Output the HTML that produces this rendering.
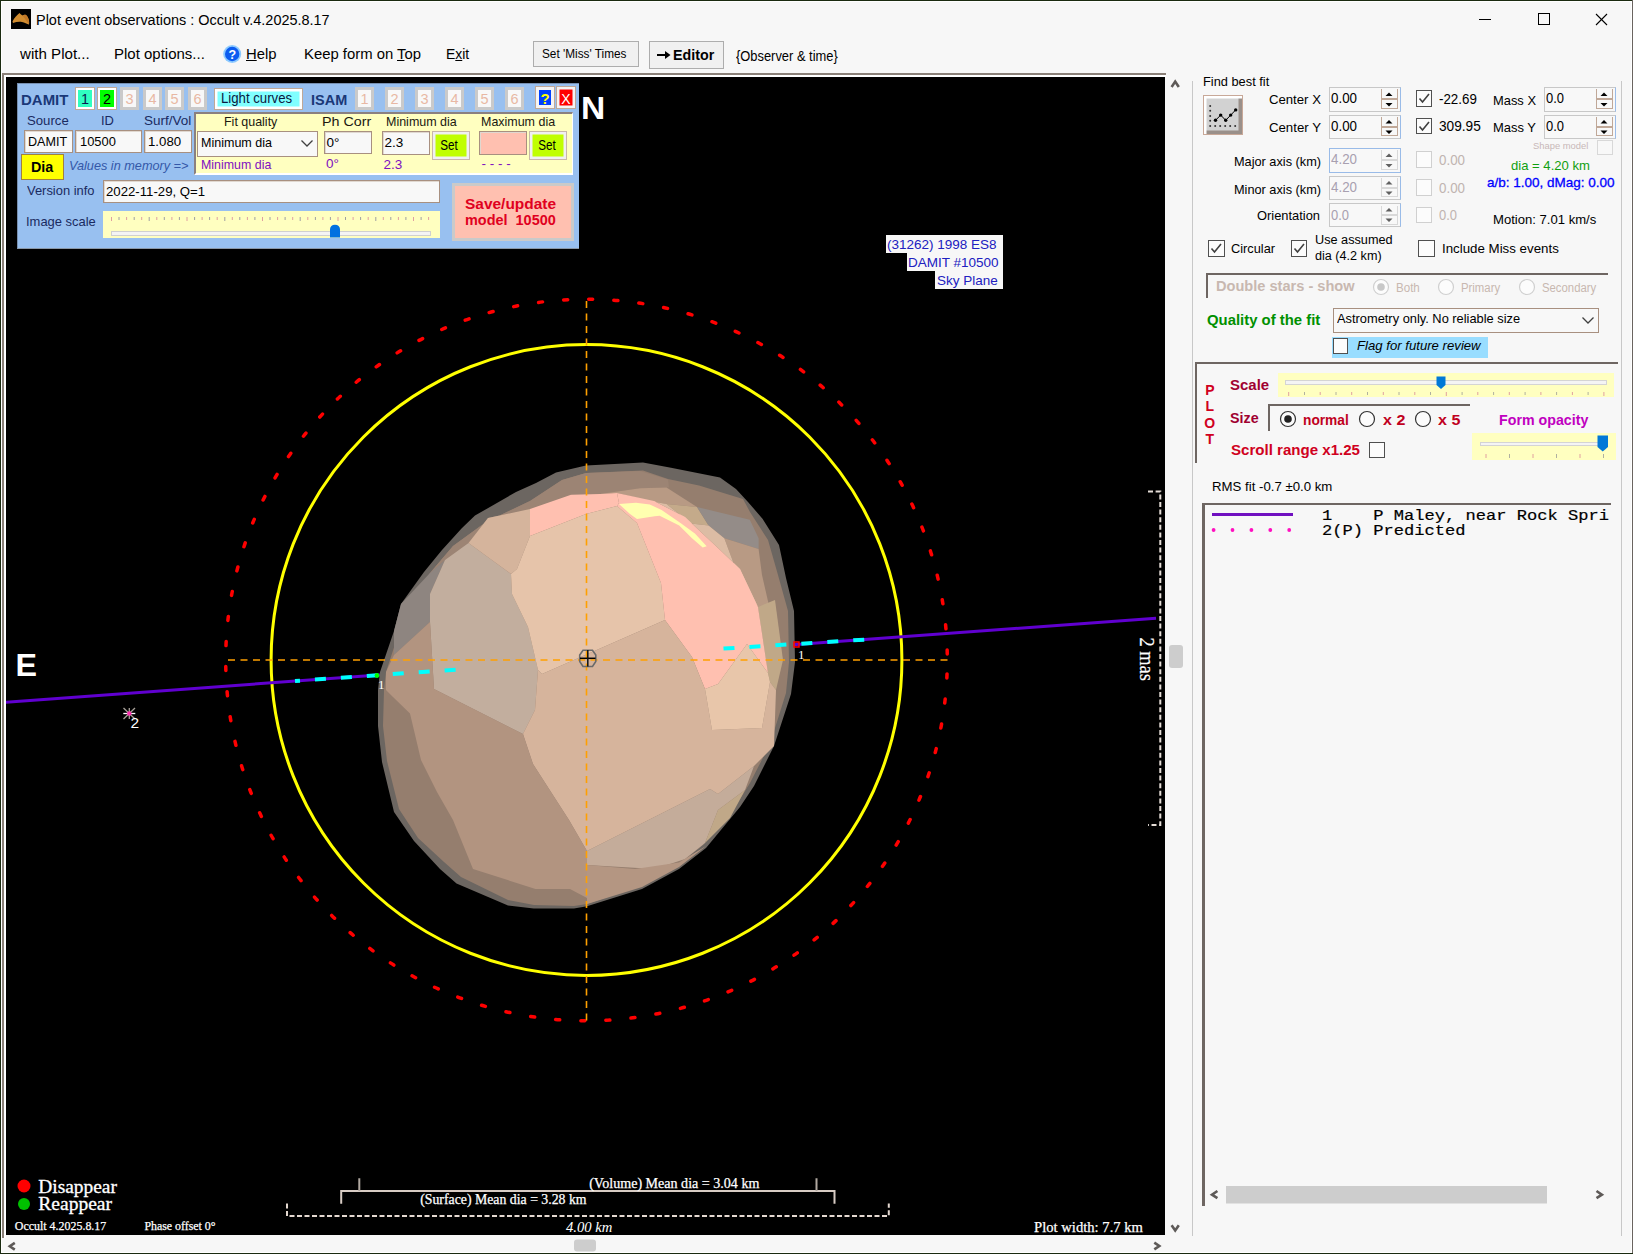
<!DOCTYPE html>
<html><head><meta charset="utf-8">
<style>
*{margin:0;padding:0;box-sizing:border-box}
html,body{width:1633px;height:1254px;overflow:hidden;background:#f7f7f7;font-family:"Liberation Sans",sans-serif;color:#000}
.a{position:absolute}
.t{position:absolute;white-space:nowrap}
</style></head><body>
<div class="a" style="left:0.0px;top:0.0px;width:1633.0px;height:1.0px;background:#1a2a10"></div>
<div class="a" style="left:0.0px;top:0.0px;width:1.0px;height:1254.0px;background:#1a2a10"></div>
<div class="a" style="left:1632.0px;top:0.0px;width:1.0px;height:1254.0px;background:#6a6460"></div>
<div class="a" style="left:0.0px;top:1253.0px;width:1633.0px;height:1.0px;background:#1a2a10"></div>
<div class="a" style="left:1.0px;top:1.0px;width:1631.0px;height:1.0px;background:#fff"></div>
<div class="a" style="left:1.0px;top:1.0px;width:1.0px;height:1252.0px;background:#fff"></div>
<div class="a" style="left:1631.0px;top:1.0px;width:1.0px;height:1252.0px;background:#fff"></div>
<div class="a" style="left:1.0px;top:1252.0px;width:1631.0px;height:1.0px;background:#fff"></div>
<div class="a" style="left:11px;top:9px;width:20px;height:20px;background:#000"></div>
<svg class="a" style="left:11px;top:9px" width="20" height="20"><path d="M1.5 12.5 C3 9 6 6 8.5 4 L10 5.5 L11.5 6.5 C13 5.5 15 5.5 16 7 C17.5 9 18.5 12 18 15.5 C16 15 13.5 13.5 11 13 C8 12.5 5 13 2 14 Z" fill="#d08c30"/><path d="M11.5 6.5 C13 5.5 15 5.5 16 7 C17.5 9 18.5 12 18 15.5 C16.5 13 14 10 11.5 6.5 Z" fill="#c07828"/></svg>
<div class="t" style="left:36.4px;top:12.0px;font-size:15.5px;line-height:15.5px;color:#000;font-weight:normal;font-style:normal;transform:scaleX(0.932);transform-origin:left center;">Plot event observations : Occult v.4.2025.8.17</div>
<svg class="a" style="left:1470px;top:8px" width="150" height="24">
<line x1="9" y1="11.5" x2="21" y2="11.5" stroke="#000" stroke-width="1"/>
<rect x="68.5" y="5.5" width="11" height="11" fill="none" stroke="#000" stroke-width="1"/>
<line x1="126" y1="6" x2="137" y2="17" stroke="#000" stroke-width="1.1"/>
<line x1="137" y1="6" x2="126" y2="17" stroke="#000" stroke-width="1.1"/>
</svg>
<div class="t" style="left:19.6px;top:45.5px;font-size:15.5px;line-height:15.5px;color:#000;font-weight:normal;font-style:normal;transform:scaleX(0.975);transform-origin:left center;">with Plot...</div>
<div class="t" style="left:114.0px;top:45.5px;font-size:15.5px;line-height:15.5px;color:#000;font-weight:normal;font-style:normal;transform:scaleX(0.967);transform-origin:left center;">Plot options...</div>
<svg class="a" style="left:222px;top:44px" width="21" height="21"><circle cx="10.2" cy="10" r="9" fill="#8ccaff"/><circle cx="10.2" cy="10" r="7.2" fill="#0c5cf0"/><text x="10.2" y="14.6" font-size="12.5" font-weight="bold" fill="#fff" text-anchor="middle" font-family="Liberation Sans">?</text></svg>
<div class="t" style="left:246.3px;top:45.5px;font-size:15.5px;line-height:15.5px;color:#000;font-weight:normal;font-style:normal;transform:scaleX(0.957);transform-origin:left center;"><u>H</u>elp</div>
<div class="t" style="left:304.0px;top:45.5px;font-size:15.5px;line-height:15.5px;color:#000;font-weight:normal;font-style:normal;transform:scaleX(0.958);transform-origin:left center;">Keep form on <u>T</u>op</div>
<div class="t" style="left:445.6px;top:45.5px;font-size:15.5px;line-height:15.5px;color:#000;font-weight:normal;font-style:normal;transform:scaleX(0.898);transform-origin:left center;">E<u>x</u>it</div>
<div class="a" style="left:533.0px;top:41.0px;width:106.0px;height:26.0px;background:#f0f0f0;border:1px solid #adadad"></div>
<div class="t" style="left:542.3px;top:47.8px;font-size:12px;line-height:12px;color:#000;font-weight:normal;font-style:normal;transform:scaleX(0.983);transform-origin:left center;">Set 'Miss' Times</div>
<div class="a" style="left:649.0px;top:41.0px;width:75.0px;height:28.0px;background:#f0f0f0;border:1px solid #adadad"></div>
<div class="t" style="left:672.8px;top:47.3px;font-size:15px;line-height:15px;color:#000;font-weight:bold;font-style:normal;transform:scaleX(0.951);transform-origin:left center;">Editor</div>
<svg class="a" style="left:656px;top:49px" width="17" height="12"><path d="M1 6 H13" stroke="#000" stroke-width="2"/><path d="M9 2 L14.5 6 L9 10 Z" fill="#000"/></svg>
<div class="t" style="left:736.4px;top:49.1px;font-size:14px;line-height:14px;color:#000;font-weight:normal;font-style:normal;transform:scaleX(0.921);transform-origin:left center;">{Observer &amp; time}</div>
<div class="a" style="left:2.0px;top:73.0px;width:1164.0px;height:2.0px;background:#8a8078"></div>
<div class="a" style="left:2.0px;top:73.0px;width:2.0px;height:1165.0px;background:#8a8078"></div>
<div class="a" style="left:4.0px;top:75.0px;width:1162.0px;height:2.0px;background:#fff"></div>
<div class="a" style="left:4.0px;top:75.0px;width:2.0px;height:1163.0px;background:#fff"></div>
<div class="a" style="left:6px;top:77px;width:1159px;height:1158px;background:#000;overflow:hidden">
<svg style="position:absolute;left:-6px;top:-77px" width="1633" height="1254" font-family="Liberation Serif">
<!-- red dashed circle -->
<circle cx="586.5" cy="660" r="360.8" fill="none" stroke="#ff0000" stroke-width="3.5" stroke-dasharray="4 21.19" stroke-dashoffset="11.15" stroke-linecap="round"/>
<!-- yellow circle -->
<circle cx="586.5" cy="660" r="315.4" fill="none" stroke="#ffff00" stroke-width="3"/>
<!-- purple chord -->
<line x1="5" y1="702.3" x2="1156" y2="618.2" stroke="#6000d0" stroke-width="3"/>
<!-- asteroid -->
<g id="ast">
<polygon fill="#6c6661" points="586,465.5 643,462.5 671,467.7 720,477.5 736,489 748,502 762.5,518.7 779,545 786,578 794,611 795,662 791,694 774,746 754,786 740,807 706,848 679,869 642,889 587,906.2 574,908.4 533.7,908.4 508,905.6 456.5,883.6 440,869 414,841 394,812 382,762 378,726 378,690 380,672 394,631 401,604 424,572 442,550 462,528 475,515.6 516,492 536,483 556,472.6"/>
<polygon fill="#957e6e" points="586,473 643,470.5 668,479 699,485.4 743,499 750,512 768,540 778,575 788,611 789,662 786,693 770,744 750,783 737,804 703,845 677,866 640,886 587,904 574,906 534,905 508,900 461,877 444,862 418,838 399,809 387,761 383,726 384,690 386,672 399,632 407,606 430,573 453,546 486,522 530,501 562,480"/>
<polygon fill="#9c8474" points="562,480 586,473 640,471 668,479.5 669,487.4 640,488.3 600,494 571,494.7 530,509 488,518 468.5,543 445,560 430,573 453,546 486,522 530,501"/>
<polygon fill="#b89a84" points="600,494 640,488.3 666.5,487.4 697,507 666.5,504 650,501 617,493"/>
<polygon fill="#c4aa8a" points="666.5,504 697,507 708.6,525.6 691,523.6"/>
<polygon fill="#948c88" points="697,507 749.8,519.7 758.6,538.3 758.6,549 724.3,538.3 708.6,525.6"/>
<polygon fill="#b89a84" points="724.3,538.3 758.6,549 762,575 770,610 776,660 768,673 758,607 738,575"/>
<polygon fill="#dcbca4" points="650,501 666.5,504 691,523.6 708.6,525.6 724.3,538.3 738,575 758,607 740,569 718,548 703,534 685,517 654,501"/>
<polygon fill="#c0a888" points="758,607 775,600 783,660 776,690 770,682 768,673"/>
<polygon fill="#8e8580" points="401,604 430,573 445,560 430,594 430,622 394,655 394,631"/>

<polygon fill="#c2ae9e" points="468.5,543 511,574 512,594 528,627 538,670 535,710 523,734 434,689 430,622 430,594 445,560"/>
<polygon fill="#d5b49c" points="468.5,543 488,518 530,509 530,536 517,569 511,574"/>
<polygon fill="#ffc0b0" points="530,509 571,494.7 600,494 617,493 619,503 617,506 586,514 530,536"/>
<polygon fill="#e6c4aa" points="530,536 586,514 617,506 637,523 661,583 665,620 542,674 538,670 528,627 512,594 511,574 517,569"/>
<polygon fill="#ffc0b0" points="617,493 654,501 685,517 703,534 718,548 740,569 758,607 768,673 747,644 718,684 705,689 692,657 665,620 661,583 637,523 617,506 619,503"/>
<polygon fill="#d6b49c" points="538,670 542,674 665,620 692,657 705,689 712,730 762,728 770,682 776,690 774,746 754,766 718,794 710,789 587,851 569,820 533,764 523,734 535,710"/>
<polygon fill="#e8c6aa" points="747,644 768,673 770,682 762,728 712,730 705,689 718,684"/>
<polygon fill="#c4ac9a" points="587,851 710,789 718,794 754,766 745,790 718,810 705,843 685,859 655,869 587,865"/>
<polygon fill="#c0a888" points="718,810 745,790 730,818 705,843"/>
<polygon fill="#b29480" points="394,655 430,622 434,689 523,734 533,764 569,820 587,851 587,898 570,889 535.5,889 473,869 453,820 437,792 421,760 410,713.5 393,697 386,690 386,672"/>
<polygon fill="#b49682" points="587,865 635,869 679,862.5 706,846 679,867 642,887 587,904"/>
<polygon fill="#ffffb0" points="619,504 636,502.7 649.8,504.5 661.6,510 681.2,523.6 694.9,533.4 706.7,546.2 702.7,547.6 692,538.3 679.2,525.6 659.6,515.8 654.7,516.3 637,519 630,514"/>
</g>
<!-- orange crosshair -->
<line x1="586.5" y1="301" x2="586.5" y2="1021" stroke="#ffa000" stroke-width="1.6" stroke-dasharray="7 5.5"/>
<line x1="228" y1="660" x2="948" y2="660" stroke="#ffa000" stroke-width="1.6" stroke-dasharray="7 5.5"/>
<!-- center symbol -->
<polygon points="583,650.2 592.5,650.2 595.8,655 595.8,661.5 592.5,666.5 583,666.5 579.7,661.5 579.7,655" fill="none" stroke="#6a6a6a" stroke-width="1.6"/>
<line x1="580" y1="658.3" x2="595.5" y2="658.3" stroke="#000" stroke-width="1.5"/>
<line x1="587.8" y1="650" x2="587.8" y2="666.5" stroke="#101010" stroke-width="1.5"/>
<!-- cyan dashes -->
<line x1="295" y1="681" x2="459" y2="669.4" stroke="#00ffff" stroke-width="4" stroke-dasharray="11 15" stroke-dashoffset="-20"/>
<line x1="723.5" y1="648.6" x2="869.4" y2="639.3" stroke="#00ffff" stroke-width="4" stroke-dasharray="11 15"/>
<circle cx="377" cy="675.5" r="2.4" fill="#00ff00"/>
<rect x="794" y="642" width="5" height="5" fill="none" stroke="#ff0000" stroke-width="1.5"/>
<text x="378" y="689" font-size="13" fill="#fff">1</text>
<text x="798" y="659" font-size="13" fill="#fff">1</text>
<!-- star 2 -->
<g stroke="#a8a098" stroke-width="1.3">
<line x1="123.5" y1="708" x2="135" y2="719"/><line x1="135" y1="708" x2="123.5" y2="719"/><line x1="129.3" y1="708" x2="129.3" y2="719"/>
</g>
<line x1="123.3" y1="713.5" x2="135.3" y2="713.5" stroke="#fff" stroke-width="1.3"/>
<circle cx="129.3" cy="713.5" r="2.2" fill="#ff30b0"/>
<text x="130.6" y="727.8" font-size="15.5" fill="#fff" font-family="Liberation Sans">2</text>
<!-- N E -->
<text transform="translate(580.9 118.7) scale(1.10 1)" font-size="30.5" fill="#fff" font-family="Liberation Sans" font-weight="bold">N</text>
<text transform="translate(15.6 675.6) scale(1.04 1)" font-size="31" fill="#fff" font-family="Liberation Sans" font-weight="bold">E</text>
<!-- info box -->
<rect x="886" y="235" width="117" height="18" fill="#f7f7f7"/>
<rect x="907" y="253" width="96" height="18" fill="#f7f7f7"/>
<rect x="935" y="271" width="68" height="18" fill="#f7f7f7"/>
<text x="887" y="249" font-size="13.5" fill="#2020c0" font-family="Liberation Sans">(31262) 1998 ES8</text>
<text x="908" y="267" font-size="13.5" fill="#2020c0" font-family="Liberation Sans">DAMIT #10500</text>
<text x="937" y="285" font-size="13.5" fill="#2020c0" font-family="Liberation Sans">Sky Plane</text>
<!-- 2 mas bar -->
<path d="M1148 491.5 H1160.3 V825 H1148" fill="none" stroke="#e4dcd6" stroke-width="2" stroke-dasharray="5 2.6"/>
<text transform="translate(1140 637.4) rotate(90)" font-size="20" fill="#fff" textLength="43.6" lengthAdjust="spacingAndGlyphs" stroke="#fff" stroke-width="0.2">2 mas</text>
<!-- legend -->
<circle cx="24" cy="1186" r="6.5" fill="#ff0000"/>
<circle cx="24" cy="1204" r="6" fill="#00c000"/>
<text x="38.3" y="1192.5" font-size="18" fill="#fff" textLength="78.6" lengthAdjust="spacingAndGlyphs" stroke="#fff" stroke-width="0.3">Disappear</text>
<text x="38.3" y="1209.7" font-size="18" fill="#fff" textLength="73.7" lengthAdjust="spacingAndGlyphs" stroke="#fff" stroke-width="0.3">Reappear</text>
<text x="14.8" y="1230" font-size="12.5" fill="#fff" textLength="91.5" lengthAdjust="spacingAndGlyphs" stroke="#fff" stroke-width="0.25">Occult 4.2025.8.17</text>
<text x="144.4" y="1230" font-size="12.5" fill="#fff" textLength="71.1" lengthAdjust="spacingAndGlyphs" stroke="#fff" stroke-width="0.25">Phase offset 0°</text>
<!-- scale bars -->
<path d="M287 1203.5 V1216 H888.8 V1203.5" fill="none" stroke="#e4d8d0" stroke-width="2" stroke-dasharray="5 2.5"/>
<path d="M341.2 1203.7 V1191.1 H834.5 V1203.7" fill="none" stroke="#d8ccc4" stroke-width="2"/>
<path d="M359.3 1178.3 V1191.1 M816.5 1178.3 V1191.1" fill="none" stroke="#b0a8a0" stroke-width="2"/>
<text x="589.2" y="1188" font-size="14" fill="#fff" textLength="170.2" lengthAdjust="spacingAndGlyphs" stroke="#fff" stroke-width="0.25">(Volume) Mean dia = 3.04 km</text>
<text x="420.2" y="1204" font-size="14" fill="#fff" textLength="166.4" lengthAdjust="spacingAndGlyphs" stroke="#fff" stroke-width="0.25">(Surface) Mean dia = 3.28 km</text>
<text x="566" y="1231.6" font-size="15" fill="#fff" font-style="italic" textLength="46.4" lengthAdjust="spacingAndGlyphs">4.00 km</text>
<text x="1034" y="1231.6" font-size="15" fill="#fff" textLength="109" lengthAdjust="spacingAndGlyphs" stroke="#fff" stroke-width="0.25">Plot width: 7.7 km</text>
</svg>

</div>
<svg class="a" style="left:1166px;top:74px" width="20" height="1164">
<path d="M5.6 13 L9.2 7.6 L12.8 13" fill="none" stroke="#5e5a58" stroke-width="2.6"/>
<rect x="3" y="571" width="14" height="23" rx="3" fill="#cdcdcd"/>
<path d="M5.6 1151.2 L9.2 1156.4 L12.8 1151.2" fill="none" stroke="#5e5a58" stroke-width="2.6"/>
</svg>
<svg class="a" style="left:2px;top:1237px" width="1166" height="17">
<path d="M12.8 5.8 L7.8 9.2 L12.8 12.6" fill="none" stroke="#5e5a58" stroke-width="2.6"/>
<rect x="572" y="2.5" width="22" height="12" rx="3" fill="#cdcdcd"/>
<path d="M1152.3 5.6 L1157.3 9 L1152.3 12.4" fill="none" stroke="#5e5a58" stroke-width="2.6"/>
</svg>
<div class="a" style="left:17.0px;top:83.0px;width:562.0px;height:166.0px;background:#98c0f0;border-left:1px solid #7890b0;border-top:1px solid #7890b0;border-bottom:1px solid #8a98a8"></div>
<div class="t" style="left:20.8px;top:91.9px;font-size:15.5px;line-height:15.5px;color:#1a3878;font-weight:bold;font-style:normal;transform:scaleX(0.966);transform-origin:left center;">DAMIT</div>
<div class="a" style="left:75.0px;top:87.0px;width:20.0px;height:23.0px;background:#fff;border:1px solid #c0a898"></div>
<div class="a" style="left:78.0px;top:90.0px;width:14.0px;height:17.0px;background:#30ffc0"></div>
<div class="t" style="left:85.0px;top:92.2px;font-size:14.5px;line-height:14.5px;color:#0a1850;font-weight:normal;font-style:normal;transform:translateX(-50%) ;">1</div>
<div class="a" style="left:97.0px;top:87.0px;width:20.0px;height:23.0px;background:#fff;border:1px solid #c0a898"></div>
<div class="a" style="left:100.0px;top:90.0px;width:14.0px;height:17.0px;background:#00ff00"></div>
<div class="t" style="left:107.0px;top:92.2px;font-size:14.5px;line-height:14.5px;color:#000;font-weight:normal;font-style:normal;transform:translateX(-50%) ;">2</div>
<div class="a" style="left:120.0px;top:87.0px;width:19.0px;height:23.0px;background:#f8f8f8;border:3.5px solid #cacaca"></div>
<div class="t" style="left:129.5px;top:92.2px;font-size:14.5px;line-height:14.5px;color:#e8b8a4;font-weight:normal;font-style:normal;transform:translateX(-50%) ;">3</div>
<div class="a" style="left:143.0px;top:87.0px;width:19.0px;height:23.0px;background:#f8f8f8;border:3.5px solid #cacaca"></div>
<div class="t" style="left:152.5px;top:92.2px;font-size:14.5px;line-height:14.5px;color:#e8b8a4;font-weight:normal;font-style:normal;transform:translateX(-50%) ;">4</div>
<div class="a" style="left:165.0px;top:87.0px;width:19.0px;height:23.0px;background:#f8f8f8;border:3.5px solid #cacaca"></div>
<div class="t" style="left:174.5px;top:92.2px;font-size:14.5px;line-height:14.5px;color:#e8b8a4;font-weight:normal;font-style:normal;transform:translateX(-50%) ;">5</div>
<div class="a" style="left:188.0px;top:87.0px;width:19.0px;height:23.0px;background:#f8f8f8;border:3.5px solid #cacaca"></div>
<div class="t" style="left:197.5px;top:92.2px;font-size:14.5px;line-height:14.5px;color:#e8b8a4;font-weight:normal;font-style:normal;transform:translateX(-50%) ;">6</div>
<div class="a" style="left:214.0px;top:87.5px;width:89.0px;height:22.5px;background:#80ffff;border:1px solid #c0a898;box-shadow:inset 0 0 0 2.5px #fff"></div>
<div class="t" style="left:221.2px;top:91.2px;font-size:14.5px;line-height:14.5px;color:#0a1840;font-weight:normal;font-style:normal;transform:scaleX(0.909);transform-origin:left center;">Light curves</div>
<div class="t" style="left:310.6px;top:91.9px;font-size:15.5px;line-height:15.5px;color:#1a3878;font-weight:bold;font-style:normal;transform:scaleX(0.934);transform-origin:left center;">ISAM</div>
<div class="a" style="left:355.0px;top:87.0px;width:19.0px;height:23.0px;background:#f8f8f8;border:3.5px solid #cacaca"></div>
<div class="t" style="left:364.5px;top:92.2px;font-size:14.5px;line-height:14.5px;color:#e8b8a4;font-weight:normal;font-style:normal;transform:translateX(-50%) ;">1</div>
<div class="a" style="left:385.0px;top:87.0px;width:19.0px;height:23.0px;background:#f8f8f8;border:3.5px solid #cacaca"></div>
<div class="t" style="left:394.5px;top:92.2px;font-size:14.5px;line-height:14.5px;color:#e8b8a4;font-weight:normal;font-style:normal;transform:translateX(-50%) ;">2</div>
<div class="a" style="left:415.0px;top:87.0px;width:19.0px;height:23.0px;background:#f8f8f8;border:3.5px solid #cacaca"></div>
<div class="t" style="left:424.5px;top:92.2px;font-size:14.5px;line-height:14.5px;color:#e8b8a4;font-weight:normal;font-style:normal;transform:translateX(-50%) ;">3</div>
<div class="a" style="left:445.0px;top:87.0px;width:19.0px;height:23.0px;background:#f8f8f8;border:3.5px solid #cacaca"></div>
<div class="t" style="left:454.5px;top:92.2px;font-size:14.5px;line-height:14.5px;color:#e8b8a4;font-weight:normal;font-style:normal;transform:translateX(-50%) ;">4</div>
<div class="a" style="left:475.0px;top:87.0px;width:19.0px;height:23.0px;background:#f8f8f8;border:3.5px solid #cacaca"></div>
<div class="t" style="left:484.5px;top:92.2px;font-size:14.5px;line-height:14.5px;color:#e8b8a4;font-weight:normal;font-style:normal;transform:translateX(-50%) ;">5</div>
<div class="a" style="left:505.0px;top:87.0px;width:19.0px;height:23.0px;background:#f8f8f8;border:3.5px solid #cacaca"></div>
<div class="t" style="left:514.5px;top:92.2px;font-size:14.5px;line-height:14.5px;color:#e8b8a4;font-weight:normal;font-style:normal;transform:translateX(-50%) ;">6</div>
<div class="a" style="left:535.0px;top:85.5px;width:20.0px;height:23.5px;background:#0040ff;border:1px solid #c0a898;box-shadow:inset 0 0 0 3px #f4f4f4"></div>
<div class="t" style="left:545.0px;top:90.8px;font-size:15px;line-height:15px;color:#ffff00;font-weight:bold;font-style:normal;transform:translateX(-50%) ;">?</div>
<div class="a" style="left:556.0px;top:85.5px;width:20.0px;height:23.5px;background:#ff0000;border:1px solid #c0a898;box-shadow:inset 0 0 0 2.5px #f4f4f4"></div>
<div class="t" style="left:566.0px;top:91.6px;font-size:14px;line-height:14px;color:#fff;font-weight:normal;font-style:normal;transform:translateX(-50%) ;">X</div>
<div class="t" style="left:27.1px;top:113.6px;font-size:13.5px;line-height:13.5px;color:#1a2a60;font-weight:normal;font-style:normal;transform:scaleX(0.975);transform-origin:left center;">Source</div>
<div class="t" style="left:101.2px;top:113.6px;font-size:13.5px;line-height:13.5px;color:#1a2a60;font-weight:normal;font-style:normal;transform:scaleX(0.956);transform-origin:left center;">ID</div>
<div class="t" style="left:144.1px;top:113.6px;font-size:13.5px;line-height:13.5px;color:#1a2a60;font-weight:normal;font-style:normal;transform:scaleX(0.998);transform-origin:left center;">Surf/Vol</div>
<div class="a" style="left:23.5px;top:129.5px;width:49.5px;height:23.0px;background:#f8f8f8;border:1px solid #a89080;box-shadow:inset 1px 1px 0 #e0d8d0"></div>
<div class="t" style="left:27.8px;top:135.1px;font-size:13.5px;line-height:13.5px;color:#000;font-weight:normal;font-style:normal;transform:scaleX(0.931);transform-origin:left center;">DAMIT</div>
<div class="a" style="left:75.0px;top:129.5px;width:67.0px;height:23.0px;background:#f8f8f8;border:1px solid #a89080;box-shadow:inset 1px 1px 0 #e0d8d0"></div>
<div class="t" style="left:79.8px;top:135.1px;font-size:13.5px;line-height:13.5px;color:#000;font-weight:normal;font-style:normal;transform:scaleX(0.954);transform-origin:left center;">10500</div>
<div class="a" style="left:143.5px;top:129.5px;width:48.0px;height:23.0px;background:#f8f8f8;border:1px solid #a89080;box-shadow:inset 1px 1px 0 #e0d8d0"></div>
<div class="t" style="left:147.8px;top:135.1px;font-size:13.5px;line-height:13.5px;color:#000;font-weight:normal;font-style:normal;transform:scaleX(0.980);transform-origin:left center;">1.080</div>
<div class="a" style="left:21.0px;top:154.0px;width:42.5px;height:25.5px;background:#ffff00;border:1px solid #a08040"></div>
<div class="t" style="left:30.8px;top:159.7px;font-size:14.5px;line-height:14.5px;color:#000;font-weight:bold;font-style:normal;transform:scaleX(0.988);transform-origin:left center;">Dia</div>
<div class="t" style="left:68.8px;top:159.1px;font-size:13.5px;line-height:13.5px;color:#3458a8;font-weight:normal;font-style:italic;transform:scaleX(0.940);transform-origin:left center;">Values in memory =&gt;</div>
<div class="a" style="left:194.0px;top:112.0px;width:379.0px;height:62.5px;background:#ffffc0;border-top:2px solid #8a8080;border-left:2px solid #8a8080;border-bottom:2px solid #fff;border-right:1px solid #fff"></div>
<div class="t" style="left:224.3px;top:114.6px;font-size:13.5px;line-height:13.5px;color:#201810;font-weight:normal;font-style:normal;transform:scaleX(0.923);transform-origin:left center;">Fit quality</div>
<div class="a" style="left:197.0px;top:130.5px;width:121.0px;height:26.0px;background:#f8f8f8;border:1px solid #a89080"></div>
<div class="t" style="left:201.3px;top:136.1px;font-size:13.5px;line-height:13.5px;color:#000;font-weight:normal;font-style:normal;transform:scaleX(0.928);transform-origin:left center;">Minimum dia</div>
<svg class="a" style="left:300px;top:139px" width="14" height="9"><path d="M1.5 1.5 L7 7 L12.5 1.5" fill="none" stroke="#404040" stroke-width="1.3"/></svg>
<div class="t" style="left:321.7px;top:114.6px;font-size:13.5px;line-height:13.5px;color:#201810;font-weight:normal;font-style:normal;transform:scaleX(1.060);transform-origin:left center;">Ph Corr</div>
<div class="a" style="left:323.5px;top:130.5px;width:48.5px;height:23.0px;background:#f8f8f8;border:1px solid #a89080;box-shadow:inset 1px 1px 0 #e0d8d0"></div>
<div class="t" style="left:326.5px;top:136.1px;font-size:13.5px;line-height:13.5px;color:#000;font-weight:normal;font-style:normal;">0°</div>
<div class="t" style="left:385.5px;top:115.1px;font-size:13.5px;line-height:13.5px;color:#201810;font-weight:normal;font-style:normal;transform:scaleX(0.925);transform-origin:left center;">Minimum dia</div>
<div class="a" style="left:381.5px;top:130.5px;width:48.0px;height:24.0px;background:#f8f8f8;border:1px solid #a89080;box-shadow:inset 1px 1px 0 #e0d8d0"></div>
<div class="t" style="left:384.5px;top:136.1px;font-size:13.5px;line-height:13.5px;color:#000;font-weight:normal;font-style:normal;">2.3</div>
<div class="a" style="left:431.5px;top:130.5px;width:38.0px;height:29.0px;background:#c0ff00;border:1px solid #c8b8a8;box-shadow:inset 0 0 0 2.5px #f0f0f0"></div>
<div class="t" style="left:449.3px;top:137.9px;font-size:14.5px;line-height:14.5px;color:#000;font-weight:normal;font-style:normal;transform:translateX(-50%) scaleX(0.804);transform-origin:center center;">Set</div>
<div class="t" style="left:480.5px;top:115.1px;font-size:13.5px;line-height:13.5px;color:#201810;font-weight:normal;font-style:normal;transform:scaleX(0.923);transform-origin:left center;">Maximum dia</div>
<div class="a" style="left:478.5px;top:130.5px;width:48.0px;height:24.0px;background:#ffc0b0;border:1px solid #a89080;box-shadow:inset 1px 1px 0 #e0d8d0"></div>
<div class="a" style="left:529.0px;top:130.5px;width:38.0px;height:29.0px;background:#c0ff00;border:1px solid #c8b8a8;box-shadow:inset 0 0 0 2.5px #f0f0f0"></div>
<div class="t" style="left:546.8px;top:137.9px;font-size:14.5px;line-height:14.5px;color:#000;font-weight:normal;font-style:normal;transform:translateX(-50%) scaleX(0.804);transform-origin:center center;">Set</div>
<div class="t" style="left:200.8px;top:158.1px;font-size:13.5px;line-height:13.5px;color:#8010c0;font-weight:normal;font-style:normal;transform:scaleX(0.919);transform-origin:left center;">Minimum dia</div>
<div class="t" style="left:326.0px;top:157.1px;font-size:13.5px;line-height:13.5px;color:#8010c0;font-weight:normal;font-style:normal;">0°</div>
<div class="t" style="left:383.5px;top:158.1px;font-size:13.5px;line-height:13.5px;color:#8010c0;font-weight:normal;font-style:normal;">2.3</div>
<div class="t" style="left:481.5px;top:156.6px;font-size:13.5px;line-height:13.5px;color:#8010c0;font-weight:normal;font-style:normal;">- - - -</div>
<div class="t" style="left:27.4px;top:183.6px;font-size:13.5px;line-height:13.5px;color:#1a2a60;font-weight:normal;font-style:normal;transform:scaleX(0.957);transform-origin:left center;">Version info</div>
<div class="a" style="left:102.5px;top:179.5px;width:337.5px;height:23.5px;background:#f8f8f8;border:1px solid #a89080;box-shadow:inset 1px 1px 0 #e0d8d0"></div>
<div class="t" style="left:105.9px;top:185.1px;font-size:13.5px;line-height:13.5px;color:#000;font-weight:normal;font-style:normal;transform:scaleX(0.977);transform-origin:left center;">2022-11-29, Q=1</div>
<div class="t" style="left:26.3px;top:215.1px;font-size:13.5px;line-height:13.5px;color:#1a2a60;font-weight:normal;font-style:normal;transform:scaleX(0.959);transform-origin:left center;">Image scale</div>
<div class="a" style="left:103.0px;top:210.5px;width:337.0px;height:27.5px;background:#ffffc0"></div>
<svg class="a" style="left:103px;top:217px" width="337" height="6"><line x1="8.5" y1="0" x2="8.5" y2="4" stroke="#e0a0a0" stroke-width="1"/><line x1="16.0" y1="0" x2="16.0" y2="3" stroke="#a0a0a0" stroke-width="1"/><line x1="23.6" y1="0" x2="23.6" y2="3" stroke="#e0a0a0" stroke-width="1"/><line x1="31.2" y1="0" x2="31.2" y2="3" stroke="#a0a0a0" stroke-width="1"/><line x1="38.7" y1="0" x2="38.7" y2="3" stroke="#e0a0a0" stroke-width="1"/><line x1="46.2" y1="0" x2="46.2" y2="4" stroke="#a0a0a0" stroke-width="1"/><line x1="53.8" y1="0" x2="53.8" y2="3" stroke="#e0a0a0" stroke-width="1"/><line x1="61.3" y1="0" x2="61.3" y2="3" stroke="#a0a0a0" stroke-width="1"/><line x1="68.9" y1="0" x2="68.9" y2="3" stroke="#e0a0a0" stroke-width="1"/><line x1="76.4" y1="0" x2="76.4" y2="3" stroke="#a0a0a0" stroke-width="1"/><line x1="84.0" y1="0" x2="84.0" y2="4" stroke="#e0a0a0" stroke-width="1"/><line x1="91.6" y1="0" x2="91.6" y2="3" stroke="#a0a0a0" stroke-width="1"/><line x1="99.1" y1="0" x2="99.1" y2="3" stroke="#e0a0a0" stroke-width="1"/><line x1="106.6" y1="0" x2="106.6" y2="3" stroke="#a0a0a0" stroke-width="1"/><line x1="114.2" y1="0" x2="114.2" y2="3" stroke="#e0a0a0" stroke-width="1"/><line x1="121.8" y1="0" x2="121.8" y2="4" stroke="#a0a0a0" stroke-width="1"/><line x1="129.3" y1="0" x2="129.3" y2="3" stroke="#e0a0a0" stroke-width="1"/><line x1="136.8" y1="0" x2="136.8" y2="3" stroke="#a0a0a0" stroke-width="1"/><line x1="144.4" y1="0" x2="144.4" y2="3" stroke="#e0a0a0" stroke-width="1"/><line x1="151.9" y1="0" x2="151.9" y2="3" stroke="#a0a0a0" stroke-width="1"/><line x1="159.5" y1="0" x2="159.5" y2="4" stroke="#e0a0a0" stroke-width="1"/><line x1="167.0" y1="0" x2="167.0" y2="3" stroke="#a0a0a0" stroke-width="1"/><line x1="174.6" y1="0" x2="174.6" y2="3" stroke="#e0a0a0" stroke-width="1"/><line x1="182.1" y1="0" x2="182.1" y2="3" stroke="#a0a0a0" stroke-width="1"/><line x1="189.7" y1="0" x2="189.7" y2="3" stroke="#e0a0a0" stroke-width="1"/><line x1="197.2" y1="0" x2="197.2" y2="4" stroke="#a0a0a0" stroke-width="1"/><line x1="204.8" y1="0" x2="204.8" y2="3" stroke="#e0a0a0" stroke-width="1"/><line x1="212.4" y1="0" x2="212.4" y2="3" stroke="#a0a0a0" stroke-width="1"/><line x1="219.9" y1="0" x2="219.9" y2="3" stroke="#e0a0a0" stroke-width="1"/><line x1="227.4" y1="0" x2="227.4" y2="3" stroke="#a0a0a0" stroke-width="1"/><line x1="235.0" y1="0" x2="235.0" y2="4" stroke="#e0a0a0" stroke-width="1"/><line x1="242.5" y1="0" x2="242.5" y2="3" stroke="#a0a0a0" stroke-width="1"/><line x1="250.1" y1="0" x2="250.1" y2="3" stroke="#e0a0a0" stroke-width="1"/><line x1="257.6" y1="0" x2="257.6" y2="3" stroke="#a0a0a0" stroke-width="1"/><line x1="265.2" y1="0" x2="265.2" y2="3" stroke="#e0a0a0" stroke-width="1"/><line x1="272.8" y1="0" x2="272.8" y2="4" stroke="#a0a0a0" stroke-width="1"/><line x1="280.3" y1="0" x2="280.3" y2="3" stroke="#e0a0a0" stroke-width="1"/><line x1="287.8" y1="0" x2="287.8" y2="3" stroke="#a0a0a0" stroke-width="1"/><line x1="295.4" y1="0" x2="295.4" y2="3" stroke="#e0a0a0" stroke-width="1"/><line x1="302.9" y1="0" x2="302.9" y2="3" stroke="#a0a0a0" stroke-width="1"/><line x1="310.5" y1="0" x2="310.5" y2="4" stroke="#e0a0a0" stroke-width="1"/><line x1="318.1" y1="0" x2="318.1" y2="3" stroke="#a0a0a0" stroke-width="1"/><line x1="325.6" y1="0" x2="325.6" y2="3" stroke="#e0a0a0" stroke-width="1"/></svg>
<div class="a" style="left:110.5px;top:231.0px;width:320.5px;height:4.5px;background:#f4f4f4;border:1px solid #d0d0d0"></div>
<svg class="a" style="left:329px;top:224px" width="12" height="14"><path d="M1 13.5 V5.5 C1 2.5 3 0.8 6 0.8 C9 0.8 11 2.5 11 5.5 V13.5 Z" fill="#0070e0"/></svg>
<div class="a" style="left:451.5px;top:183.0px;width:122.0px;height:58.0px;background:#ffc0b0;border:3px solid #cacaca"></div>
<div class="t" style="left:465.4px;top:196.3px;font-size:15px;line-height:15px;color:#e00020;font-weight:bold;font-style:normal;transform:scaleX(1.031);transform-origin:left center;">Save/update</div>
<div class="t" style="left:465.4px;top:212.3px;font-size:15px;line-height:15px;color:#e00020;font-weight:bold;font-style:normal;transform:scaleX(0.963);transform-origin:left center;">model&nbsp; 10500</div>
<div class="a" style="left:1192.0px;top:81.0px;width:1.0px;height:1155.0px;background:#c8c8c8"></div>
<div class="a" style="left:1621.0px;top:81.0px;width:1.0px;height:1155.0px;background:#c8c8c8"></div>
<div class="t" style="left:1203.4px;top:75.2px;font-size:13.5px;line-height:13.5px;color:#000;font-weight:normal;font-style:normal;transform:scaleX(0.949);transform-origin:left center;">Find best fit</div>
<div class="a" style="left:1203.2px;top:95.2px;width:39.9px;height:39.7px;background:#d2d2d2;border:1px solid #c8a898;box-shadow:inset 2.5px 2.5px 0 #fff,inset -3.5px -3.5px 0 #9a908a"></div>
<svg class="a" style="left:1206px;top:98px" width="36" height="36"><g fill="#303030"><circle cx="4.2" cy="7.9" r="1"/><circle cx="4.2" cy="12.8" r="1"/><circle cx="4.2" cy="17.9" r="1"/><circle cx="4.2" cy="22.8" r="1"/><circle cx="4.2" cy="27.9" r="1"/><circle cx="9.2" cy="27.9" r="1"/><circle cx="14.2" cy="27.9" r="1"/><circle cx="19.2" cy="27.9" r="1"/><circle cx="24.2" cy="27.9" r="1"/><circle cx="29.2" cy="27.9" r="1"/></g><polyline points="9.5,22.3 14.7,17.1 19.7,22.3 24.7,17.1 29.7,11.9" fill="none" stroke="#000" stroke-width="1"/><g fill="#000"><circle cx="9.5" cy="22.3" r="1.7"/><circle cx="14.7" cy="17.1" r="1.7"/><circle cx="19.7" cy="22.3" r="1.7"/><circle cx="24.7" cy="17.1" r="1.7"/><circle cx="29.7" cy="11.9" r="1.7"/></g></svg>
<div class="a" style="left:1328.5px;top:86.5px;width:72.0px;height:25.0px;background:#f8f8f8;border:1.5px solid #c8c8c8;border-right:1.5px solid #99bbe8"></div>
<div class="a" style="left:1380.5px;top:89.0px;width:17.0px;height:20.0px;background:#f8f8f8;border-left:1.5px solid #c0a898;border-right:1.5px solid #c0a898;border-bottom:1.5px solid #c0a898"></div>
<div class="a" style="left:1380.5px;top:98.0px;width:17.0px;height:2.0px;background:#c0a898"></div>
<svg class="a" style="left:1384.0px;top:86.5px" width="10" height="25.0"><path d="M1.5 9.0 L5 5.5 L8.5 9.0 Z M1.5 16.0 L5 19.5 L8.5 16.0 Z" fill="#000"/></svg>
<div class="t" style="left:1331.0px;top:91.1px;font-size:14px;line-height:14px;color:#000;font-weight:normal;font-style:normal;transform:scaleX(0.954);transform-origin:left center;">0.00</div>
<div class="a" style="left:1328.5px;top:114.5px;width:72.0px;height:24.0px;background:#f8f8f8;border:1.5px solid #c8c8c8;border-right:1.5px solid #99bbe8"></div>
<div class="a" style="left:1380.5px;top:117.0px;width:17.0px;height:19.0px;background:#f8f8f8;border-left:1.5px solid #c0a898;border-right:1.5px solid #c0a898;border-bottom:1.5px solid #c0a898"></div>
<div class="a" style="left:1380.5px;top:125.5px;width:17.0px;height:2.0px;background:#c0a898"></div>
<svg class="a" style="left:1384.0px;top:114.5px" width="10" height="24.0"><path d="M1.5 8.5 L5 5.0 L8.5 8.5 Z M1.5 15.5 L5 19.0 L8.5 15.5 Z" fill="#000"/></svg>
<div class="t" style="left:1331.0px;top:119.1px;font-size:14px;line-height:14px;color:#000;font-weight:normal;font-style:normal;transform:scaleX(0.954);transform-origin:left center;">0.00</div>
<div class="a" style="left:1328.5px;top:147.5px;width:72.0px;height:25.0px;background:#f8f8f8;border:1.5px solid #c8c8c8;border-right:1.5px solid #99bbe8"></div>
<div class="a" style="left:1380.5px;top:150.0px;width:17.0px;height:20.0px;background:#f8f8f8;border-left:1.5px solid #d8d8d8;border-right:1.5px solid #d8d8d8;border-bottom:1.5px solid #d8d8d8"></div>
<div class="a" style="left:1380.5px;top:159.0px;width:17.0px;height:2.0px;background:#d8d8d8"></div>
<svg class="a" style="left:1384.0px;top:147.5px" width="10" height="25.0"><path d="M1.5 9.0 L5 5.5 L8.5 9.0 Z M1.5 16.0 L5 19.5 L8.5 16.0 Z" fill="#606060"/></svg>
<div class="t" style="left:1331.0px;top:152.1px;font-size:14px;line-height:14px;color:#a8a0b0;font-weight:normal;font-style:normal;transform:scaleX(0.954);transform-origin:left center;">4.20</div>
<div class="a" style="left:1328.5px;top:175.5px;width:72.0px;height:24.0px;background:#f8f8f8;border:1.5px solid #c8c8c8;border-right:1.5px solid #99bbe8"></div>
<div class="a" style="left:1380.5px;top:178.0px;width:17.0px;height:19.0px;background:#f8f8f8;border-left:1.5px solid #d8d8d8;border-right:1.5px solid #d8d8d8;border-bottom:1.5px solid #d8d8d8"></div>
<div class="a" style="left:1380.5px;top:186.5px;width:17.0px;height:2.0px;background:#d8d8d8"></div>
<svg class="a" style="left:1384.0px;top:175.5px" width="10" height="24.0"><path d="M1.5 8.5 L5 5.0 L8.5 8.5 Z M1.5 15.5 L5 19.0 L8.5 15.5 Z" fill="#606060"/></svg>
<div class="t" style="left:1331.0px;top:180.1px;font-size:14px;line-height:14px;color:#a8a0b0;font-weight:normal;font-style:normal;transform:scaleX(0.954);transform-origin:left center;">4.20</div>
<div class="a" style="left:1328.5px;top:203.0px;width:72.0px;height:24.0px;background:#f8f8f8;border:1.5px solid #c8c8c8;border-right:1.5px solid #99bbe8"></div>
<div class="a" style="left:1380.5px;top:205.5px;width:17.0px;height:19.0px;background:#f8f8f8;border-left:1.5px solid #d8d8d8;border-right:1.5px solid #d8d8d8;border-bottom:1.5px solid #d8d8d8"></div>
<div class="a" style="left:1380.5px;top:214.0px;width:17.0px;height:2.0px;background:#d8d8d8"></div>
<svg class="a" style="left:1384.0px;top:203.0px" width="10" height="24.0"><path d="M1.5 8.5 L5 5.0 L8.5 8.5 Z M1.5 15.5 L5 19.0 L8.5 15.5 Z" fill="#606060"/></svg>
<div class="t" style="left:1331.0px;top:207.6px;font-size:14px;line-height:14px;color:#a8a0b0;font-weight:normal;font-style:normal;transform:scaleX(0.925);transform-origin:left center;">0.0</div>
<div class="a" style="left:1328.5px;top:147.5px;width:72.0px;height:25.0px;border:1px solid #99bbe8;background:transparent"></div>
<div class="t" style="left:1321.0px;top:93.1px;font-size:13.5px;line-height:13.5px;color:#000;font-weight:normal;font-style:normal;transform:translateX(-100%) scaleX(0.978);transform-origin:right center;">Center X</div>
<div class="t" style="left:1321.0px;top:120.6px;font-size:13.5px;line-height:13.5px;color:#000;font-weight:normal;font-style:normal;transform:translateX(-100%) scaleX(0.982);transform-origin:right center;">Center Y</div>
<div class="t" style="left:1320.7px;top:155.1px;font-size:13.5px;line-height:13.5px;color:#000;font-weight:normal;font-style:normal;transform:translateX(-100%) scaleX(0.943);transform-origin:right center;">Major axis (km)</div>
<div class="t" style="left:1320.7px;top:182.6px;font-size:13.5px;line-height:13.5px;color:#000;font-weight:normal;font-style:normal;transform:translateX(-100%) scaleX(0.943);transform-origin:right center;">Minor axis (km)</div>
<div class="t" style="left:1319.9px;top:208.6px;font-size:13.5px;line-height:13.5px;color:#000;font-weight:normal;font-style:normal;transform:translateX(-100%) scaleX(0.954);transform-origin:right center;">Orientation</div>
<div class="a" style="left:1415.5px;top:90.2px;width:16.5px;height:16.5px;background:#fcfcfc;border:1.5px solid #505050"></div>
<svg class="a" style="left:1415.5px;top:90.2px" width="16.5" height="16.5"><polyline points="3.5,8.5 6.5,12 13,4" fill="none" stroke="#404040" stroke-width="1.6"/></svg>
<div class="t" style="left:1439.2px;top:91.6px;font-size:14px;line-height:14px;color:#000;font-weight:normal;font-style:normal;transform:scaleX(0.952);transform-origin:left center;">-22.69</div>
<div class="a" style="left:1415.5px;top:117.5px;width:16.5px;height:16.5px;background:#fcfcfc;border:1.5px solid #505050"></div>
<svg class="a" style="left:1415.5px;top:117.5px" width="16.5" height="16.5"><polyline points="3.5,8.5 6.5,12 13,4" fill="none" stroke="#404040" stroke-width="1.6"/></svg>
<div class="t" style="left:1439.2px;top:119.0px;font-size:14px;line-height:14px;color:#000;font-weight:normal;font-style:normal;transform:scaleX(0.976);transform-origin:left center;">309.95</div>
<div class="t" style="left:1492.5px;top:94.0px;font-size:13.5px;line-height:13.5px;color:#000;font-weight:normal;font-style:normal;transform:scaleX(0.955);transform-origin:left center;">Mass X</div>
<div class="t" style="left:1492.5px;top:121.1px;font-size:13.5px;line-height:13.5px;color:#000;font-weight:normal;font-style:normal;transform:scaleX(0.961);transform-origin:left center;">Mass Y</div>
<div class="a" style="left:1543.5px;top:86.5px;width:72.0px;height:25.0px;background:#f8f8f8;border:1.5px solid #c8c8c8;border-right:1.5px solid #99bbe8"></div>
<div class="a" style="left:1595.5px;top:89.0px;width:17.0px;height:20.0px;background:#f8f8f8;border-left:1.5px solid #c0a898;border-right:1.5px solid #c0a898;border-bottom:1.5px solid #c0a898"></div>
<div class="a" style="left:1595.5px;top:98.0px;width:17.0px;height:2.0px;background:#c0a898"></div>
<svg class="a" style="left:1599.0px;top:86.5px" width="10" height="25.0"><path d="M1.5 9.0 L5 5.5 L8.5 9.0 Z M1.5 16.0 L5 19.5 L8.5 16.0 Z" fill="#000"/></svg>
<div class="t" style="left:1546.0px;top:91.1px;font-size:14px;line-height:14px;color:#000;font-weight:normal;font-style:normal;transform:scaleX(0.925);transform-origin:left center;">0.0</div>
<div class="a" style="left:1543.5px;top:114.5px;width:72.0px;height:24.0px;background:#f8f8f8;border:1.5px solid #c8c8c8;border-right:1.5px solid #99bbe8"></div>
<div class="a" style="left:1595.5px;top:117.0px;width:17.0px;height:19.0px;background:#f8f8f8;border-left:1.5px solid #c0a898;border-right:1.5px solid #c0a898;border-bottom:1.5px solid #c0a898"></div>
<div class="a" style="left:1595.5px;top:125.5px;width:17.0px;height:2.0px;background:#c0a898"></div>
<svg class="a" style="left:1599.0px;top:114.5px" width="10" height="24.0"><path d="M1.5 8.5 L5 5.0 L8.5 8.5 Z M1.5 15.5 L5 19.0 L8.5 15.5 Z" fill="#000"/></svg>
<div class="t" style="left:1546.0px;top:119.1px;font-size:14px;line-height:14px;color:#000;font-weight:normal;font-style:normal;transform:scaleX(0.925);transform-origin:left center;">0.0</div>
<div class="t" style="left:1532.7px;top:140.5px;font-size:9.5px;line-height:9.5px;color:#c8b8b8;font-weight:normal;font-style:normal;transform:scaleX(0.988);transform-origin:left center;">Shape model</div>
<div class="a" style="left:1597.0px;top:140.0px;width:16.0px;height:15.0px;border:1px solid #d8d8d8;background:#f8f8f8"></div>
<div class="a" style="left:1415.5px;top:151.2px;width:16.5px;height:16.5px;background:#fcfcfc;border:1.5px solid #d0d0d0"></div>
<div class="t" style="left:1439.2px;top:153.4px;font-size:14px;line-height:14px;color:#c0b4b0;font-weight:normal;font-style:normal;transform:scaleX(0.954);transform-origin:left center;">0.00</div>
<div class="a" style="left:1415.5px;top:179.0px;width:16.5px;height:16.5px;background:#fcfcfc;border:1.5px solid #d0d0d0"></div>
<div class="t" style="left:1439.2px;top:180.5px;font-size:14px;line-height:14px;color:#c0b4b0;font-weight:normal;font-style:normal;transform:scaleX(0.954);transform-origin:left center;">0.00</div>
<div class="a" style="left:1415.5px;top:206.5px;width:16.5px;height:16.5px;background:#fcfcfc;border:1.5px solid #d0d0d0"></div>
<div class="t" style="left:1439.2px;top:207.6px;font-size:14px;line-height:14px;color:#c0b4b0;font-weight:normal;font-style:normal;transform:scaleX(0.925);transform-origin:left center;">0.0</div>
<div class="t" style="left:1510.6px;top:158.8px;font-size:13.5px;line-height:13.5px;color:#10a010;font-weight:normal;font-style:normal;transform:scaleX(0.969);transform-origin:left center;">dia = 4.20 km</div>
<div class="t" style="left:1487.3px;top:175.9px;font-size:13.5px;line-height:13.5px;color:#0000ff;font-weight:normal;font-style:normal;transform:scaleX(0.999);-webkit-text-stroke:0.3px #0000ff;transform-origin:left center;">a/b: 1.00, dMag: 0.00</div>
<div class="t" style="left:1492.5px;top:213.4px;font-size:13.5px;line-height:13.5px;color:#000;font-weight:normal;font-style:normal;transform:scaleX(0.969);transform-origin:left center;">Motion: 7.01 km/s</div>
<div class="a" style="left:1208.0px;top:240.2px;width:16.5px;height:16.5px;background:#fcfcfc;border:1.5px solid #505050"></div>
<svg class="a" style="left:1208.0px;top:240.2px" width="16.5" height="16.5"><polyline points="3.5,8.5 6.5,12 13,4" fill="none" stroke="#404040" stroke-width="1.6"/></svg>
<div class="t" style="left:1231.4px;top:241.9px;font-size:13.5px;line-height:13.5px;color:#000;font-weight:normal;font-style:normal;transform:scaleX(0.946);transform-origin:left center;">Circular</div>
<div class="a" style="left:1290.7px;top:240.2px;width:16.5px;height:16.5px;background:#fcfcfc;border:1.5px solid #505050"></div>
<svg class="a" style="left:1290.7px;top:240.2px" width="16.5" height="16.5"><polyline points="3.5,8.5 6.5,12 13,4" fill="none" stroke="#404040" stroke-width="1.6"/></svg>
<div class="t" style="left:1315.2px;top:234.3px;font-size:12.5px;line-height:12.5px;color:#000;font-weight:normal;font-style:normal;transform:scaleX(1.015);transform-origin:left center;">Use assumed</div>
<div class="t" style="left:1315.2px;top:250.4px;font-size:12.5px;line-height:12.5px;color:#000;font-weight:normal;font-style:normal;transform:scaleX(1.009);transform-origin:left center;">dia (4.2 km)</div>
<div class="a" style="left:1418.2px;top:240.2px;width:16.5px;height:16.5px;background:#fcfcfc;border:1.5px solid #505050"></div>
<div class="t" style="left:1442.4px;top:242.1px;font-size:13.5px;line-height:13.5px;color:#000;font-weight:normal;font-style:normal;transform:scaleX(0.985);transform-origin:left center;">Include Miss events</div>
<div class="a" style="left:1206.0px;top:273.3px;width:402.0px;height:2.2px;background:#6e6662"></div>
<div class="a" style="left:1206.0px;top:273.3px;width:2.2px;height:24.7px;background:#6e6662"></div>
<div class="t" style="left:1216.4px;top:278.9px;font-size:14px;line-height:14px;color:#c8b8b0;font-weight:bold;font-style:normal;transform:scaleX(1.042);transform-origin:left center;">Double stars - show</div>
<svg class="a" style="left:1372.0px;top:278.0px" width="18" height="18"><circle cx="9" cy="9" r="7.5" fill="#fcfcfc" stroke="#d0d0d0" stroke-width="1.2"/><circle cx="9" cy="9" r="3.8" fill="#c8c8c8"/></svg>
<div class="t" style="left:1395.5px;top:282.2px;font-size:12px;line-height:12px;color:#c8b8b0;font-weight:normal;font-style:normal;transform:scaleX(0.964);transform-origin:left center;">Both</div>
<svg class="a" style="left:1437.2px;top:278.0px" width="18" height="18"><circle cx="9" cy="9" r="7.5" fill="#fcfcfc" stroke="#d0d0d0" stroke-width="1.2"/></svg>
<div class="t" style="left:1461.3px;top:282.2px;font-size:12px;line-height:12px;color:#c8b8b0;font-weight:normal;font-style:normal;transform:scaleX(0.946);transform-origin:left center;">Primary</div>
<svg class="a" style="left:1518.3px;top:278.0px" width="18" height="18"><circle cx="9" cy="9" r="7.5" fill="#fcfcfc" stroke="#d0d0d0" stroke-width="1.2"/></svg>
<div class="t" style="left:1541.8px;top:282.2px;font-size:12px;line-height:12px;color:#c8b8b0;font-weight:normal;font-style:normal;transform:scaleX(0.945);transform-origin:left center;">Secondary</div>
<div class="t" style="left:1206.5px;top:311.8px;font-size:15px;line-height:15px;color:#009000;font-weight:bold;font-style:normal;transform:scaleX(0.992);transform-origin:left center;">Quality of the fit</div>
<div class="a" style="left:1332.5px;top:307.5px;width:266.5px;height:25.0px;background:#f8f8f8;border:1.5px solid #a89080"></div>
<div class="t" style="left:1336.6px;top:311.6px;font-size:13.5px;line-height:13.5px;color:#000;font-weight:normal;font-style:normal;transform:scaleX(0.951);transform-origin:left center;">Astrometry only. No reliable size</div>
<svg class="a" style="left:1581px;top:316px" width="14" height="9"><path d="M1.5 1.5 L7 7 L12.5 1.5" fill="none" stroke="#404040" stroke-width="1.3"/></svg>
<div class="a" style="left:1332.0px;top:337.0px;width:156.0px;height:20.5px;background:#99ddff"></div>
<div class="a" style="left:1332.8px;top:338.3px;width:15.5px;height:15.5px;background:#fcfcfc;border:1.5px solid #505050"></div>
<div class="t" style="left:1356.5px;top:339.1px;font-size:13.5px;line-height:13.5px;color:#000;font-weight:normal;font-style:italic;transform:scaleX(0.975);transform-origin:left center;">Flag for future review</div>
<div class="a" style="left:1195.0px;top:362.0px;width:423.0px;height:2.2px;background:#6e6662"></div>
<div class="a" style="left:1195.0px;top:362.0px;width:2.2px;height:101.0px;background:#6e6662"></div>
<div class="t" style="left:1209.8px;top:382.8px;font-size:14px;line-height:14px;color:#d00020;font-weight:bold;font-style:normal;transform:translateX(-50%) ;">P</div>
<div class="t" style="left:1209.8px;top:398.7px;font-size:14px;line-height:14px;color:#d00020;font-weight:bold;font-style:normal;transform:translateX(-50%) ;">L</div>
<div class="t" style="left:1209.8px;top:415.5px;font-size:14px;line-height:14px;color:#d00020;font-weight:bold;font-style:normal;transform:translateX(-50%) ;">O</div>
<div class="t" style="left:1209.8px;top:432.1px;font-size:14px;line-height:14px;color:#d00020;font-weight:bold;font-style:normal;transform:translateX(-50%) ;">T</div>
<div class="t" style="left:1230.4px;top:378.1px;font-size:14.5px;line-height:14.5px;color:#a00030;font-weight:bold;font-style:normal;transform:scaleX(1.032);transform-origin:left center;">Scale</div>
<div class="a" style="left:1278.0px;top:373.0px;width:335.5px;height:23.5px;background:#ffffc0"></div>
<div class="a" style="left:1285.0px;top:379.5px;width:322.0px;height:5.0px;background:#f4f4f4;border:1px solid #d4d4d4"></div>
<svg class="a" style="left:1278px;top:391.5px" width="336" height="5"><line x1="10.7" y1="0" x2="10.7" y2="4" stroke="#e0a0a0" stroke-width="1"/><line x1="26.5" y1="0" x2="26.5" y2="3" stroke="#b0b0a0" stroke-width="1"/><line x1="42.2" y1="0" x2="42.2" y2="3" stroke="#e0a0a0" stroke-width="1"/><line x1="58.0" y1="0" x2="58.0" y2="3" stroke="#b0b0a0" stroke-width="1"/><line x1="73.7" y1="0" x2="73.7" y2="3" stroke="#e0a0a0" stroke-width="1"/><line x1="89.5" y1="0" x2="89.5" y2="3" stroke="#b0b0a0" stroke-width="1"/><line x1="105.3" y1="0" x2="105.3" y2="3" stroke="#e0a0a0" stroke-width="1"/><line x1="121.0" y1="0" x2="121.0" y2="3" stroke="#b0b0a0" stroke-width="1"/><line x1="136.8" y1="0" x2="136.8" y2="3" stroke="#e0a0a0" stroke-width="1"/><line x1="152.5" y1="0" x2="152.5" y2="3" stroke="#b0b0a0" stroke-width="1"/><line x1="168.3" y1="0" x2="168.3" y2="4" stroke="#e0a0a0" stroke-width="1"/><line x1="184.1" y1="0" x2="184.1" y2="3" stroke="#b0b0a0" stroke-width="1"/><line x1="199.8" y1="0" x2="199.8" y2="3" stroke="#e0a0a0" stroke-width="1"/><line x1="215.6" y1="0" x2="215.6" y2="3" stroke="#b0b0a0" stroke-width="1"/><line x1="231.3" y1="0" x2="231.3" y2="3" stroke="#e0a0a0" stroke-width="1"/><line x1="247.1" y1="0" x2="247.1" y2="3" stroke="#b0b0a0" stroke-width="1"/><line x1="262.9" y1="0" x2="262.9" y2="3" stroke="#e0a0a0" stroke-width="1"/><line x1="278.6" y1="0" x2="278.6" y2="3" stroke="#b0b0a0" stroke-width="1"/><line x1="294.4" y1="0" x2="294.4" y2="3" stroke="#e0a0a0" stroke-width="1"/><line x1="310.1" y1="0" x2="310.1" y2="3" stroke="#b0b0a0" stroke-width="1"/><line x1="325.9" y1="0" x2="325.9" y2="4" stroke="#e0a0a0" stroke-width="1"/></svg>
<svg class="a" style="left:1436px;top:376px" width="10" height="14"><path d="M0.5 0.5 H9.5 V9 L5 13 L0.5 9 Z" fill="#0078d7"/></svg>
<div class="t" style="left:1230.4px;top:411.4px;font-size:14.5px;line-height:14.5px;color:#a00030;font-weight:bold;font-style:normal;transform:scaleX(0.986);transform-origin:left center;">Size</div>
<div class="a" style="left:1267.5px;top:404.0px;width:202.5px;height:2.2px;background:#6e6662"></div>
<div class="a" style="left:1267.5px;top:404.0px;width:2.2px;height:27.0px;background:#6e6662"></div>
<svg class="a" style="left:1278.5px;top:409.7px" width="18" height="18"><circle cx="9" cy="9" r="7.5" fill="#fcfcfc" stroke="#333" stroke-width="1.2"/><circle cx="9" cy="9" r="3.8" fill="#222"/></svg>
<div class="t" style="left:1302.5px;top:412.6px;font-size:14px;line-height:14px;color:#c00020;font-weight:bold;font-style:normal;transform:scaleX(0.981);transform-origin:left center;">normal</div>
<svg class="a" style="left:1358.4px;top:409.7px" width="18" height="18"><circle cx="9" cy="9" r="7.5" fill="#fcfcfc" stroke="#333" stroke-width="1.2"/></svg>
<div class="t" style="left:1382.5px;top:412.6px;font-size:14px;line-height:14px;color:#c00020;font-weight:bold;font-style:normal;transform:scaleX(1.146);transform-origin:left center;">x 2</div>
<svg class="a" style="left:1413.5px;top:409.7px" width="18" height="18"><circle cx="9" cy="9" r="7.5" fill="#fcfcfc" stroke="#333" stroke-width="1.2"/></svg>
<div class="t" style="left:1437.5px;top:412.6px;font-size:14px;line-height:14px;color:#c00020;font-weight:bold;font-style:normal;transform:scaleX(1.146);transform-origin:left center;">x 5</div>
<div class="t" style="left:1498.9px;top:412.6px;font-size:14px;line-height:14px;color:#c000c0;font-weight:bold;font-style:normal;transform:scaleX(1.016);transform-origin:left center;">Form opacity</div>
<div class="t" style="left:1231.0px;top:443.2px;font-size:14.5px;line-height:14.5px;color:#d00020;font-weight:bold;font-style:normal;transform:scaleX(1.039);transform-origin:left center;">Scroll range x1.25</div>
<div class="a" style="left:1369.2px;top:441.9px;width:16.3px;height:16.3px;background:#fcfcfc;border:1.5px solid #505050"></div>
<div class="a" style="left:1472.0px;top:433.0px;width:143.5px;height:26.5px;background:#ffffc0"></div>
<div class="a" style="left:1480.0px;top:442.0px;width:126.0px;height:3.5px;background:#f4f4f4;border:1px solid #d4d4d4"></div>
<svg class="a" style="left:1484px;top:454px" width="130" height="5"><line x1="2.0" y1="0" x2="2.0" y2="4" stroke="#e0a0a0" stroke-width="1"/><line x1="25.5" y1="0" x2="25.5" y2="4" stroke="#b0b0a0" stroke-width="1"/><line x1="49.0" y1="0" x2="49.0" y2="4" stroke="#e0a0a0" stroke-width="1"/><line x1="72.5" y1="0" x2="72.5" y2="4" stroke="#b0b0a0" stroke-width="1"/><line x1="96.0" y1="0" x2="96.0" y2="4" stroke="#e0a0a0" stroke-width="1"/><line x1="119.5" y1="0" x2="119.5" y2="4" stroke="#b0b0a0" stroke-width="1"/></svg>
<svg class="a" style="left:1596.5px;top:435px" width="12" height="17"><path d="M0.5 0.5 H11 V12 L5.75 16.5 L0.5 12 Z" fill="#0078d7"/></svg>
<div class="t" style="left:1212.1px;top:480.3px;font-size:13.5px;line-height:13.5px;color:#000;font-weight:normal;font-style:normal;transform:scaleX(0.979);transform-origin:left center;">RMS fit -0.7 ±0.0 km</div>
<div class="a" style="left:1202.2px;top:502.5px;width:408.8px;height:2.5px;background:#6e6662"></div>
<div class="a" style="left:1202.2px;top:502.5px;width:2.6px;height:703.5px;background:#6e6662"></div>
<div class="a" style="left:1211.5px;top:512.5px;width:81.5px;height:3.0px;background:#7010c0"></div>
<svg class="a" style="left:1210px;top:527px" width="90" height="6"><circle cx="3.6" cy="3" r="1.9" fill="#ff10c0"/><circle cx="22.5" cy="3" r="1.9" fill="#ff10c0"/><circle cx="41.4" cy="3" r="1.9" fill="#ff10c0"/><circle cx="60.3" cy="3" r="1.9" fill="#ff10c0"/><circle cx="79.2" cy="3" r="1.9" fill="#ff10c0"/></svg>
<div class="t" style="left:1322.0px;top:508.6px;font-size:15.5px;line-height:15.5px;color:#000;font-weight:normal;font-style:normal;font-family:'Liberation Mono',monospace;transform:scaleX(1.102);white-space:pre;-webkit-text-stroke:0.2px #000;transform-origin:left center;">1    P Maley, near Rock Spri</div>
<div class="t" style="left:1322.0px;top:523.7px;font-size:15.5px;line-height:15.5px;color:#000;font-weight:normal;font-style:normal;font-family:'Liberation Mono',monospace;transform:scaleX(1.103);white-space:pre;-webkit-text-stroke:0.2px #000;transform-origin:left center;">2(P) Predicted</div>
<svg class="a" style="left:1205px;top:1185px" width="406" height="20">
<path d="M12.4 6 L7 9.7 L12.4 13.2" fill="none" stroke="#5e5a58" stroke-width="2.6"/>
<rect x="21" y="1" width="321" height="17.5" fill="#cdcdcd"/>
<path d="M391.5 6 L396.9 9.7 L391.5 13.2" fill="none" stroke="#5e5a58" stroke-width="2.6"/>
</svg>
</body></html>
